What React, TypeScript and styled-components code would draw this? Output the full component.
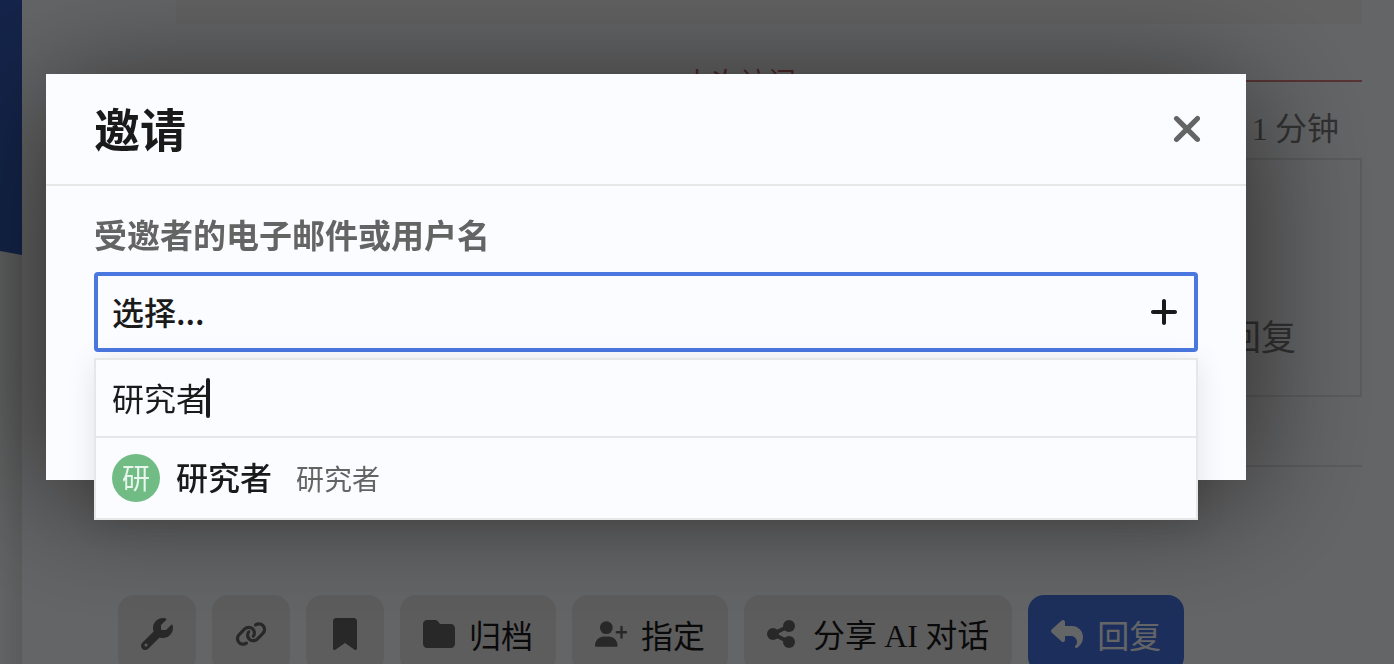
import React, { useState } from 'react';
import styled, { createGlobalStyle, css } from 'styled-components';
import {
  FaXmark,
  FaPlus,
  FaWrench,
  FaLink,
  FaBookmark,
  FaFolder,
  FaReply,
} from 'react-icons/fa6';

const GlobalStyle = createGlobalStyle`
  *, *::before, *::after { box-sizing: border-box; }
  body {
    margin: 0;
    overflow: hidden;
    background: #fafcff;
    color: #1a1a1a;
    font-family: "Noto Sans CJK SC", sans-serif;
    font-size: 32px;
    font-weight: 400;
    line-height: 44px;
  }
  button, input { font: inherit; color: inherit; }
  h1, p { margin: 0; }
`;

const Page = styled.div`
  display: flex;
  min-height: 100vh;
`;

const Sidebar = styled.aside`
  flex: 0 0 22px;
  background: linear-gradient(to right, #f4f6f8, #e4e5e7);
`;

const Banner = styled.svg`
  display: block;
  width: 100%;
  height: 255px;
`;

const Topic = styled.main`
  flex: 1;
  min-width: 0;
  padding: 0 32px 0 96px;
`;

const Post = styled.article`
  padding-left: 58px;
`;

const Quote = styled.div`
  height: 24px;
  background: #f7f5f4;
`;

const LastVisit = styled.div`
  display: flex;
  align-items: center;
  height: 102px;
  padding-top: 12px;
  color: #c86464;
  font-size: 28px;
  line-height: 36px;

  &::before,
  &::after {
    content: "";
    flex: 1;
    height: 2px;
    background: #d98080;
  }
`;

const Latin = styled.span`
  font-family: "Liberation Serif", serif;
`;

const PostDate = styled.div`
  height: 32px;
  padding-right: 23px;
  text-align: right;
  color: #7c7c7c;
  line-height: 0;
`;

const ReplyBox = styled.div`
  display: flex;
  align-items: flex-end;
  justify-content: flex-end;
  height: 239px;
  padding: 0 64px 38px;
  border: 2px solid #e4e4e4;
  color: #7c7c7c;
  font-size: 35px;
`;

const Divider = styled.hr`
  height: 2px;
  margin: 68px 0 0;
  border: 0;
  background: #e4e4e4;
`;

const Footer = styled.footer`
  display: flex;
  gap: 16px;
  margin-top: 128px;
`;

const FooterButton = styled.button<{ $primary?: boolean }>`
  display: flex;
  align-items: center;
  gap: 14px;
  flex: none;
  height: 78px;
  padding: 0 23px;
  border: 0;
  border-radius: 16px;
  background: #e9e9e9;
  color: #1a1a1a;
  white-space: nowrap;

  svg {
    width: 32px;
    height: 32px;
    color: #646464;
  }

  ${({ $primary }) =>
    $primary &&
    css`
      background: #4876e6;
      color: #fafcff;
      svg { color: #fafcff; }
    `}
`;

const Backdrop = styled.div`
  position: fixed;
  inset: 0;
  padding: 74px 148px 0 46px;
  background: rgba(0, 0, 0, 0.6);
`;

const Modal = styled.section`
  background: #fbfcff;
  box-shadow: 0 16px 120px rgba(0, 0, 0, 0.6);
`;

const ModalHeader = styled.header`
  display: flex;
  align-items: center;
  justify-content: space-between;
  height: 112px;
  padding: 0 38px 0 48px;
  border-bottom: 2px solid #e6e8e8;
`;

const Title = styled.h1`
  padding-bottom: 4px;
  font-size: 46px;
  line-height: 56px;
  font-weight: 700;
`;

const CloseButton = styled.button`
  display: flex;
  padding: 0;
  border: 0;
  background: none;
  color: #646464;

  svg {
    width: 42px;
    height: 42px;
  }
`;

const ModalBody = styled.div`
  padding: 26px 48px 128px;
`;

const Label = styled.label`
  display: block;
  margin-bottom: 16px;
  color: #646464;
  font-size: 33px;
  font-weight: 700;
`;

const Chooser = styled.div`
  position: relative;
`;

const ChooserHeader = styled.button`
  display: flex;
  align-items: center;
  justify-content: space-between;
  width: 100%;
  height: 80px;
  padding: 0 14px;
  border: 4px solid #4a77e0;
  border-radius: 4px;
  background: #fbfcff;
  font-weight: 500;

  svg {
    width: 32px;
    height: 32px;
  }
`;

const ChooserText = styled.span`
  padding-bottom: 2px;
`;

const Dropdown = styled.div`
  position: absolute;
  top: 86px;
  left: 0;
  right: 0;
  border: 2px solid #e6e8e8;
  background: #fbfcff;
  box-shadow: 0 4px 28px rgba(0, 0, 0, 0.1);
`;

const FilterRow = styled.div`
  display: flex;
  align-items: center;
  height: 78px;
  padding: 0 16px;
  border-bottom: 2px solid #e6e8e8;
`;

const FilterInput = styled.input`
  field-sizing: content;
  padding: 0 0 2px;
  border: 0;
  outline: 0;
  background: none;
  caret-color: transparent;
`;

const Caret = styled.span`
  width: 4px;
  height: 40px;
  margin-left: -2px;
  border-radius: 2px;
  background: #1a1a1a;
`;

const UserRow = styled.button`
  display: flex;
  align-items: center;
  width: 100%;
  height: 80px;
  padding: 0 16px;
  border: 0;
  background: none;
  font-weight: 500;
`;

const Avatar = styled.span`
  display: flex;
  align-items: center;
  justify-content: center;
  width: 48px;
  height: 48px;
  padding-bottom: 2px;
  margin-right: 16px;
  border-radius: 50%;
  background: #70bc84;
  color: #e8f5ec;
  font-size: 28px;
  font-weight: 400;
`;

const Names = styled.span`
  display: flex;
  align-items: baseline;
  gap: 24px;
  padding-bottom: 2px;
`;

const FullName = styled.span`
  color: #646464;
  font-size: 28px;
  font-weight: 400;
`;

const UserPlusIcon = () => (
  <svg viewBox="0 0 32 32" fill="currentColor" aria-hidden="true">
    <circle cx="11.3" cy="9.6" r="6.4" />
    <path d="M0 27.4C0 22.3 4 18.4 9.2 18.4h4.2c5.2 0 9.2 3.9 9.2 9 0 .7-.6 1.3-1.3 1.3H1.3C.6 28.7 0 28.1 0 27.400z" />
    <path d="M26.500 9v10.600M21.800 14.300h9.400" stroke="currentColor" strokeWidth="2.400" strokeLinecap="round" />
  </svg>
);

const ShareIcon = () => (
  <svg viewBox="0 0 32 32" fill="currentColor" aria-hidden="true">
    <path d="M6 16L22 8M6 16l16 8" stroke="currentColor" strokeWidth="4" />
    <circle cx="6" cy="16" r="6" />
    <circle cx="22" cy="8" r="6" />
    <circle cx="22" cy="24" r="6" />
  </svg>
);

export default function App() {
  const [filter, setFilter] = useState('研究者');

  return (
    <>
      <GlobalStyle />
      <Page>
        <Sidebar>
          <Banner viewBox="0 0 22 255" preserveAspectRatio="none" aria-hidden="true">
            <defs>
              <linearGradient id="banner" x1="0" y1="0" x2="0" y2="1">
                <stop offset="0" stopColor="#3358b8" />
                <stop offset="1" stopColor="#335cb8" />
              </linearGradient>
            </defs>
            <path d="M0 0h22v255L0 251z" fill="url(#banner)" />
          </Banner>
        </Sidebar>
        <Topic>
          <Post>
            <Quote />
          </Post>
          <LastVisit>上次访问</LastVisit>
          <Post>
            <PostDate>
              <Latin>1</Latin> 分钟
            </PostDate>
            <ReplyBox>回复</ReplyBox>
            <Divider />
          </Post>
          <Footer>
            <FooterButton aria-label="管理"><FaWrench /></FooterButton>
            <FooterButton aria-label="链接"><FaLink /></FooterButton>
            <FooterButton aria-label="书签"><FaBookmark /></FooterButton>
            <FooterButton><FaFolder /><span>归档</span></FooterButton>
            <FooterButton><UserPlusIcon /><span>指定</span></FooterButton>
            <FooterButton>
              <ShareIcon />
              <span>分享 <Latin>AI</Latin> 对话</span>
            </FooterButton>
            <FooterButton $primary><FaReply /><span>回复</span></FooterButton>
          </Footer>
        </Topic>
      </Page>
      <Backdrop>
        <Modal role="dialog" aria-labelledby="invite-title">
          <ModalHeader>
            <Title id="invite-title">邀请</Title>
            <CloseButton aria-label="关闭"><FaXmark /></CloseButton>
          </ModalHeader>
          <ModalBody>
            <Label htmlFor="invitee">受邀者的电子邮件或用户名</Label>
            <Chooser>
              <ChooserHeader id="invitee" aria-expanded="true">
                <ChooserText>选择...</ChooserText>
                <FaPlus />
              </ChooserHeader>
              <Dropdown>
                <FilterRow>
                  <FilterInput
                    aria-label="搜索"
                    value={filter}
                    onChange={(event) => setFilter(event.target.value)}
                  />
                  <Caret />
                </FilterRow>
                <UserRow>
                  <Avatar>研</Avatar>
                  <Names>
                    研究者
                    <FullName>研究者</FullName>
                  </Names>
                </UserRow>
              </Dropdown>
            </Chooser>
          </ModalBody>
        </Modal>
      </Backdrop>
    </>
  );
}
